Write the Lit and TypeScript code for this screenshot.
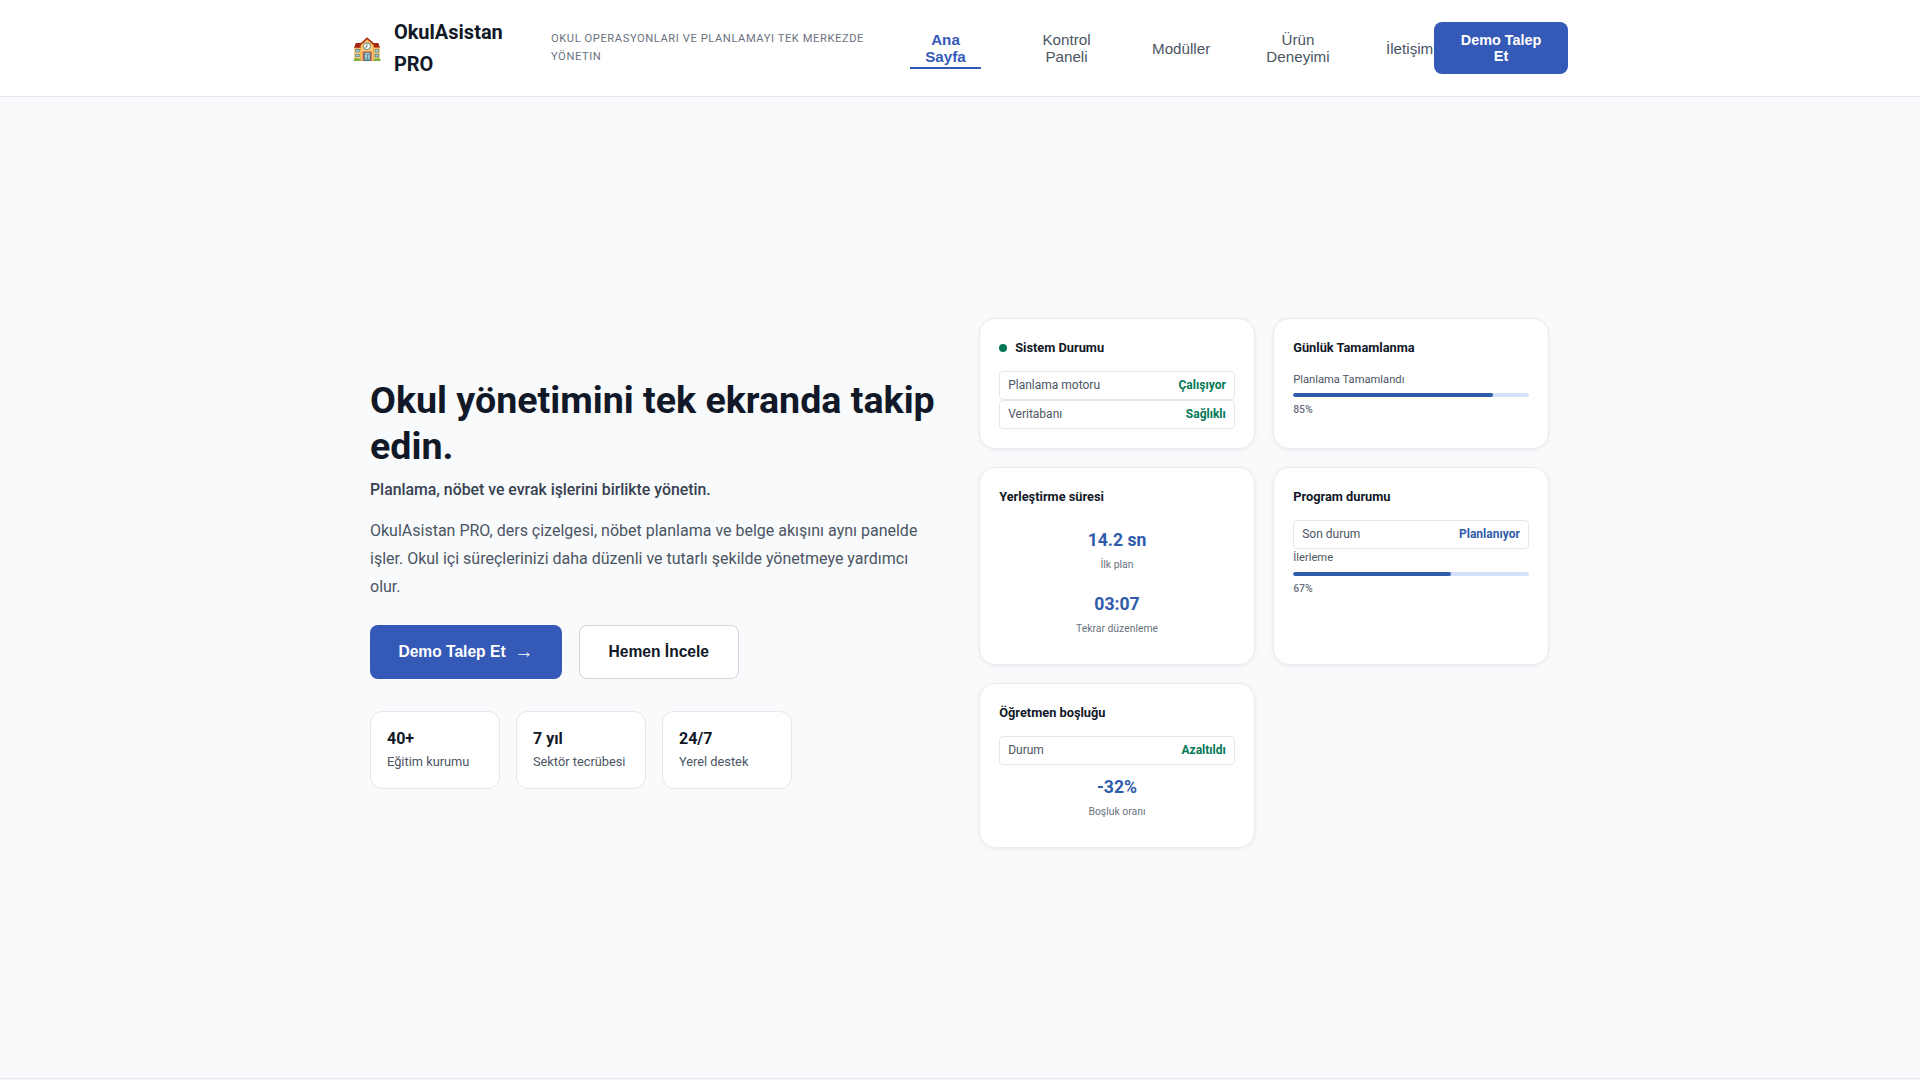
import { LitElement, css, html } from "lit";
import { customElement } from "lit/decorators.js";

const NAV = [
  { label: "Ana Sayfa", cls: "w-ana active" },
  { label: "Kontrol Paneli", cls: "w-kontrol" },
  { label: "Modüller", cls: "w-moduller" },
  { label: "Ürün Deneyimi", cls: "w-urun" },
  { label: "İletişim", cls: "w-iletisim" }
];

const STATS = [
  { value: "40+", label: "Eğitim kurumu" },
  { value: "7 yıl", label: "Sektör tecrübesi" },
  { value: "24/7", label: "Yerel destek" }
];

@customElement("app-root")
export class AppRoot extends LitElement {
  static styles = css`
    :host {
      display: block;
      height: 1080px;
      overflow: hidden;
      background: #f9fafb;
      color: #111827;
      font-family: Roboto, "Liberation Sans", sans-serif;
      line-height: 1.6;
    }

    button {
      font-family: "Liberation Sans", Arial, sans-serif;
      cursor: pointer;
    }

    header {
      background: #fff;
      border-bottom: 1px solid #e5e7eb;
    }

    .bar {
      display: flex;
      align-items: center;
      width: 1216px;
      height: 96px;
      margin: 0 auto;
    }

    .brand {
      display: flex;
      align-items: center;
      gap: 12px;
      width: 199px;
      flex: none;
    }

    .logo {
      font-family: "Noto Color Emoji", sans-serif;
      font-size: 24px;
      line-height: 1;
    }

    .name {
      width: 120px;
      font-size: 20px;
      font-weight: 700;
    }

    .tagline {
      flex: none;
      width: 340px;
      margin-right: 19px;
      font-size: 11.2px;
      line-height: 18px;
      letter-spacing: 0.05em;
      text-transform: uppercase;
      color: #6b7280;
    }

    nav {
      display: flex;
      gap: 56px;
      flex: none;
      padding-top: 4px;
    }

    nav button {
      flex: none;
      padding: 0 0 2px;
      background: none;
      border: 0;
      border-bottom: 2px solid transparent;
      color: #4b5563;
      font-size: 15.2px;
    }

    nav button.active {
      color: #3559b7;
      font-weight: 700;
      border-bottom-color: #3559b7;
    }

    .w-ana { width: 71px; }
    .w-kontrol { width: 59px; }
    .w-moduller { width: 58px; }
    .w-urun { width: 64px; }
    .w-iletisim { width: 47px; }

    .cta {
      flex: none;
      width: 134px;
      height: 52px;
      margin-left: 1px;
      padding: 0 24px;
      border: 0;
      border-radius: 8px;
      background: #3559b7;
      color: #fff;
      font-size: 14.4px;
      font-weight: 700;
    }

    main {
      display: flex;
      align-items: center;
      justify-content: center;
      height: 982px;
      box-sizing: border-box;
      padding-bottom: 8px;
      border-bottom: 1px solid #e5e7eb;
    }

    .hero {
      display: grid;
      grid-template-columns: 1fr 571px;
      gap: 40px;
      align-items: center;
      width: 1180px;
    }

    h1 {
      margin: 0 0 8px;
      font-size: 37.6px;
      line-height: 1.2;
      font-weight: 700;
      color: #111827;
    }

    .sub {
      margin: 0 0 15px;
      font-size: 15.84px;
      font-weight: 500;
      color: #374151;
    }

    .desc {
      margin: 0 0 24px;
      font-size: 16px;
      line-height: 28.16px;
      color: #4b5563;
    }

    .actions {
      display: flex;
      gap: 16.5px;
      margin-bottom: 32px;
    }

    .actions button {
      display: flex;
      align-items: center;
      justify-content: center;
      height: 54px;
      border-radius: 8px;
      font-size: 15.6px;
      font-weight: 700;
    }

    .primary {
      gap: 9px;
      width: 192px;
      border: 0;
      background: #3559b7;
      color: #fff;
    }

    .primary span {
      font-size: 19px;
      line-height: 1;
      font-weight: 400;
      padding-bottom: 2px;
    }

    .secondary {
      width: 160.5px;
      background: #fff;
      border: 1px solid #d1d5db;
      color: #111827;
    }

    .stats {
      display: flex;
      gap: 16.4px;
    }

    .stat {
      width: 129.6px;
      box-sizing: border-box;
      padding: 14px 16px 15px;
      background: #fff;
      border: 1px solid #e5e7eb;
      border-radius: 12px;
    }

    .stat b {
      display: block;
      font-size: 16px;
      font-weight: 700;
    }

    .stat small {
      display: block;
      font-size: 12.8px;
      color: #4b5563;
    }

    .cards {
      display: grid;
      grid-template-columns: 276px 276px;
      gap: 18px;
      margin-bottom: 1px;
    }

    .card {
      box-sizing: border-box;
      padding: 19.2px;
      background: #fff;
      border: 1px solid #e9ebef;
      border-radius: 16px;
      box-shadow: 0 1px 5px rgba(17, 24, 39, 0.06);
    }

    .title {
      display: flex;
      align-items: center;
      gap: 8px;
      margin-bottom: 12.32px;
      font-size: 12.8px;
      font-weight: 700;
    }

    .dot {
      width: 8px;
      height: 8px;
      border-radius: 50%;
      background: #047857;
    }

    .row {
      display: flex;
      justify-content: space-between;
      padding: 4px 8px;
      background: #fff;
      border: 1px solid #e5e7eb;
      border-radius: 4px;
      font-size: 12px;
      color: #4b5563;
    }

    .row b {
      font-weight: 700;
      color: #047857;
    }

    .row b.blue {
      color: #2f5dab;
    }

    .p-label {
      font-size: 11.2px;
      color: #4b5563;
    }

    .track {
      height: 4px;
      margin-top: 5px;
      border-radius: 2px;
      background: #d3e1fb;
      overflow: hidden;
    }

    .fill {
      height: 100%;
      border-radius: 2px;
      background: #2f5dab;
    }

    .p-value {
      margin-top: 4.5px;
      font-size: 10.4px;
      font-weight: 500;
      color: #6b7280;
    }

    .metrics {
      display: flex;
      flex-direction: column;
      gap: 4.5px;
      margin-top: 1.5px;
      padding-bottom: 0.5px;
      text-align: center;
    }

    .metrics.after-row {
      margin-top: 2px;
      padding-bottom: 1.5px;
    }

    .metric {
      padding: 6px 0;
    }

    .metric b {
      display: block;
      font-size: 17.6px;
      font-weight: 700;
      color: #2f5dab;
    }

    .metric small {
      display: block;
      margin-top: 3px;
      font-size: 10.4px;
      color: #6b7280;
    }
  `;

  progress(label: string, pct: number) {
    return html`
      <div class="p-label">${label}</div>
      <div class="track"><div class="fill" style="width:${pct}%"></div></div>
      <div class="p-value">${pct}%</div>
    `;
  }

  metric(value: string, label: string) {
    return html`<div class="metric"><b>${value}</b><small>${label}</small></div>`;
  }

  render() {
    return html`
      <header>
        <div class="bar">
          <div class="brand">
            <span class="logo">🏫</span>
            <span class="name">OkulAsistan PRO</span>
          </div>
          <div class="tagline">Okul operasyonları ve planlamayı tek merkezde yönetin</div>
          <nav>
            ${NAV.map((n) => html`<button class=${n.cls}>${n.label}</button>`)}
          </nav>
          <button class="cta">Demo Talep Et</button>
        </div>
      </header>
      <main>
        <section class="hero">
          <div>
            <h1>Okul yönetimini tek ekranda takip edin.</h1>
            <p class="sub">Planlama, nöbet ve evrak işlerini birlikte yönetin.</p>
            <p class="desc">
              OkulAsistan PRO, ders çizelgesi, nöbet planlama ve belge akışını aynı panelde işler.
              Okul içi süreçlerinizi daha düzenli ve tutarlı şekilde yönetmeye yardımcı olur.
            </p>
            <div class="actions">
              <button class="primary">Demo Talep Et <span>→</span></button>
              <button class="secondary">Hemen İncele</button>
            </div>
            <div class="stats">
              ${STATS.map(
                (s) => html`<div class="stat"><b>${s.value}</b><small>${s.label}</small></div>`
              )}
            </div>
          </div>
          <div class="cards">
            <div class="card">
              <div class="title"><span class="dot"></span>Sistem Durumu</div>
              <div class="row"><span>Planlama motoru</span><b>Çalışıyor</b></div>
              <div class="row"><span>Veritabanı</span><b>Sağlıklı</b></div>
            </div>
            <div class="card">
              <div class="title">Günlük Tamamlanma</div>
              ${this.progress("Planlama Tamamlandı", 85)}
            </div>
            <div class="card">
              <div class="title">Yerleştirme süresi</div>
              <div class="metrics">
                ${this.metric("14.2 sn", "İlk plan")} ${this.metric("03:07", "Tekrar düzenleme")}
              </div>
            </div>
            <div class="card">
              <div class="title">Program durumu</div>
              <div class="row"><span>Son durum</span><b class="blue">Planlanıyor</b></div>
              ${this.progress("İlerleme", 67)}
            </div>
            <div class="card">
              <div class="title">Öğretmen boşluğu</div>
              <div class="row"><span>Durum</span><b>Azaltıldı</b></div>
              <div class="metrics after-row">${this.metric("-32%", "Boşluk oranı")}</div>
            </div>
          </div>
        </section>
      </main>
    `;
  }
}
